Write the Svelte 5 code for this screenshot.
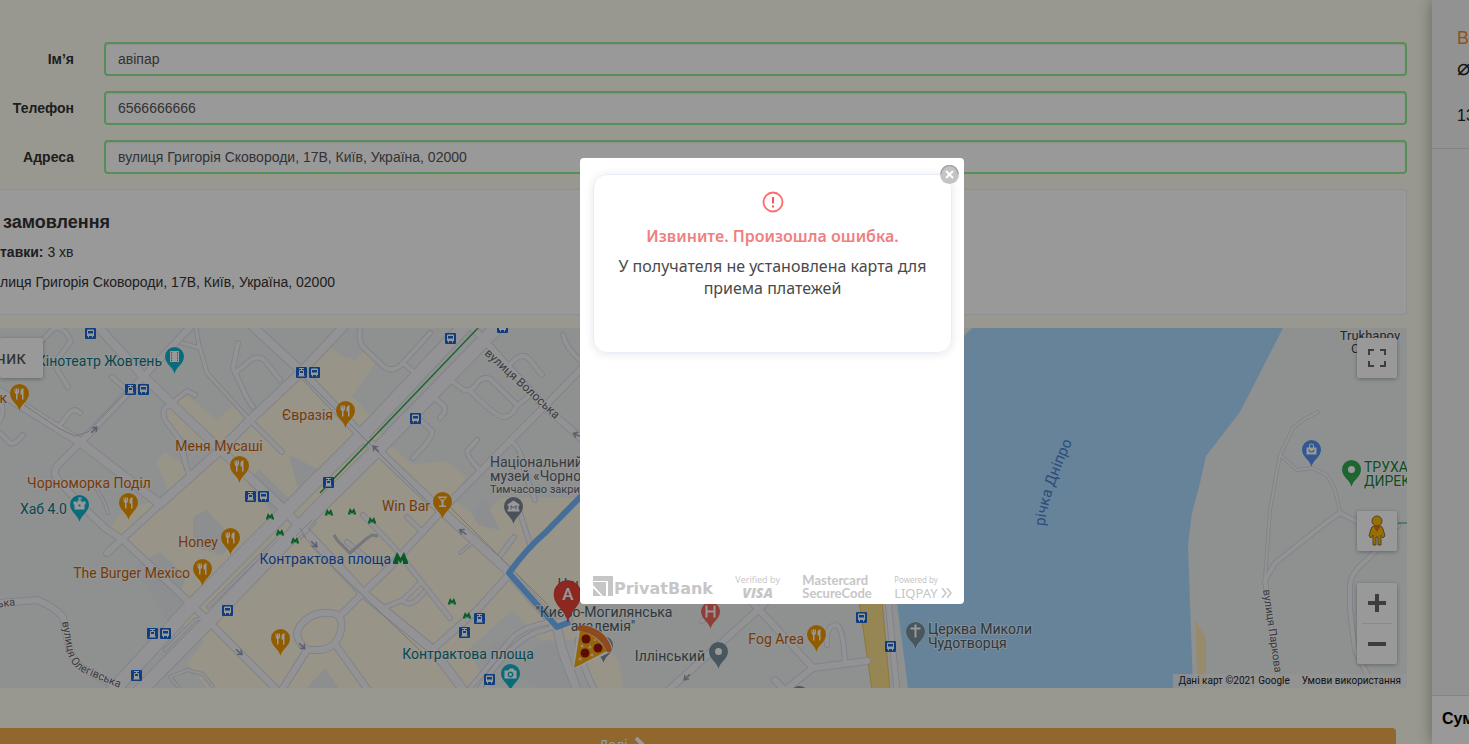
<script>
  let fields = $state([
    { id: 'name', label: 'Ім’я', value: 'авіпар' },
    { id: 'phone', label: 'Телефон', value: '6566666666' },
    { id: 'address', label: 'Адреса', value: 'вулиця Григорія Сковороди, 17В, Київ, Україна, 02000' }
  ]);
  let open = $state(true);

  const food = '#f29900';
  const teal = '#12b5cb';
  const slate = '#78909c';
  const brown = '#c5630c';
  const tealText = '#0d7782';
  const slateText = '#4a6068';

  const roads = [
    { w: 3, d: 'M182 343L200 348L207 373L247 417M196 328L199 346' },
    { w: 4, d: 'M43 340L52 330Q60 325 67 334L71 341L60 356Q52 364 60 374L68 387M60 425L70 412Q76 408 80 413M0 433L10 443Q14 446 23 435M0 400Q5 412 0 420M112 377L127 390M182 452L188 472' },
    { w: 4, d: 'M188 472L180 440L165 420Q161 410 168 406L187 391L195 395M238 343L233 368L247 398L253 407M235 373L252 359Q260 355 266 362L280 380M250 420L282 452' },
    { w: 4, d: 'M360 330Q358 342 364 348L383 366Q393 374 403 363L430 333M403 363L415 373M450 380L464 390Q470 392 475 386Q482 375 490 379L517 405Q512 417 503 417Q495 416 470 391M517 406L530 395M508 366L517 358Q524 353 530 360L542 375' },
    { w: 4, d: 'M435 398L444 406Q447 411 440 418M420 420L432 431Q434 437 413 458M477 440L468 450Q464 454 480 470M563 335Q566 348 580 360M513 443Q522 450 524 470L535 500M520 513L531 547' },
    { w: 4, d: 'M363 515L393 546L420 580L450 618M407 517L423 533M347 542L372 562M383 608L403 600L420 583M403 600Q410 610 424 592M514 537L497 560' },
    { w: 2, d: 'M460 553L472 543M208 607L280 536L300 528M165 650L195 620L228 610M170 677L187 670L203 674L213 687M170 677L178 687M95 487Q105 500 108 513' },
    { w: 6, d: 'M193 324L143 377L80 443L57 466Q52 473 58 480L83 507L105 528L123 540L190 603L280 693L307 650M157 507L107 553M0 603L37 600Q55 607 63 617L67 637Q70 658 82 668L120 688' },
    { w: 6, d: 'M307 650Q292 637 300 626Q312 611 330 613Q344 614 341 630Q337 648 320 650ZM335 644L368 690M341 615L363 593L390 567L450 502L543 408L584 366' },
    { w: 8, d: 'M92 320L143 376L213 443L276 502L306 532L363 593L433 650L465 692M0 392L80 442L160 504L217 453L250 420L300 373L348 322M250 324L300 370L363 437L433 503L507 570L557 627L562 650L577 690' },
    { w: 6, d: 'M473 328L543 405L584 441M430 652L477 610L507 577' },
    { w: 4, d: 'M467 692L513 637Q530 622 570 620M558 625L545 630Q515 635 480 688' },
    { w: 13, d: 'M472 318L360 437L280 517L190 607L108 696' },
    { w: 13, d: 'M508 316L380 447L313 513L213 617L135 696' },
    { w: 6, d: 'M662 696L758 610L772 596M750 600L813 668L780 694M813 668L867 661M775 680L784 690' },
    { w: 4, d: 'M827 645Q825 626 836 625Q843 625 845 662M702 621L715 610' },
    { w: 5, d: 'M888 600L897 692M578 640Q583 670 595 690' },
    { w: 2, d: 'M1318 412L1303 420L1293 428L1280 455L1270 510L1265 578M1280 455L1297 470L1312 468L1327 475L1335 490L1340 512' },
    { w: 4, d: 'M1398 526L1380 533L1340 513L1327 522L1275 563L1265 580L1277 667L1278 690M1377 550L1358 568Q1350 577 1350 587V610L1355 650L1375 690' }
  ];

  const pins = [
    { x: 174, y: 374, c: teal, g: 'film' },
    { x: 19, y: 411, c: food, g: 'fork' },
    { x: 345, y: 428, c: food, g: 'fork' },
    { x: 239, y: 483, c: food, g: 'fork' },
    { x: 128, y: 520, c: food, g: 'fork' },
    { x: 79, y: 522, c: teal, g: 'castle' },
    { x: 230, y: 555, c: food, g: 'fork' },
    { x: 202, y: 586, c: food, g: 'fork' },
    { x: 280, y: 656, c: food, g: 'fork' },
    { x: 442, y: 519, c: food, g: 'glass' },
    { x: 513, y: 524, c: '#7f8894', g: 'museum' },
    { x: 510, y: 691, c: teal, g: 'camera' },
    { x: 816, y: 652, c: food, g: 'fork' },
    { x: 710, y: 629, c: '#ee675c', g: 'H' },
    { x: 718, y: 669, c: slate, g: 'dot' },
    { x: 603, y: 663, c: slate, g: 'dot' },
    { x: 799, y: 713, c: slate, g: 'dot' },
    { x: 915, y: 649, c: slate, g: 'cross' },
    { x: 1311, y: 467, c: '#5491f5', g: 'bag' },
    { x: 1351, y: 487, c: '#34a853', g: 'dot' }
  ];

  const labels = [
    { x: 162, y: 366, t: 'Кінотеатр Жовтень', c: tealText, a: 'end' },
    { x: 7, y: 403, t: 'к', c: brown, a: 'end' },
    { x: 333, y: 420, t: 'Євразія', c: brown, a: 'end' },
    { x: 219, y: 451, t: 'Меня Мусаші', c: brown, a: 'middle' },
    { x: 89, y: 488, t: 'Чорноморка Поділ', c: brown, a: 'middle' },
    { x: 67, y: 514, t: 'Хаб 4.0', c: tealText, a: 'end' },
    { x: 218, y: 547, t: 'Honey', c: brown, a: 'end' },
    { x: 190, y: 578, t: 'The Burger Mexico', c: brown, a: 'end' },
    { x: 430, y: 511, t: 'Win Bar', c: brown, a: 'end' },
    { x: 391, y: 564, t: 'Контрактова площа', c: '#185abc', a: 'end' },
    { x: 468, y: 659, t: 'Контрактова площа', c: tealText, a: 'middle' },
    { x: 490, y: 467, t: 'Національний', c: '#5b6470', a: 'start' },
    { x: 490, y: 481, t: 'музей «Чорнобиль»', c: '#5b6470', a: 'start' },
    { x: 490, y: 493, t: 'Тимчасово закрито', c: '#5b6470', a: 'start', s: 11 },
    { x: 604, y: 589, t: 'Національний', c: slateText, a: 'middle' },
    { x: 604, y: 617, t: '"Києво-Могилянська', c: slateText, a: 'middle' },
    { x: 603, y: 631, t: 'академія"', c: slateText, a: 'middle' },
    { x: 705, y: 661, t: 'Іллінський', c: slateText, a: 'end' },
    { x: 804, y: 644, t: 'Fog Area', c: brown, a: 'end' },
    { x: 928, y: 634, t: 'Церква Миколи', c: slateText, a: 'start' },
    { x: 928, y: 648, t: 'Чудотворця', c: slateText, a: 'start' },
    { x: 1364, y: 472, t: 'ТРУХАНІВ', c: '#188038', a: 'start' },
    { x: 1364, y: 486, t: 'ДИРЕКЦІЯ', c: '#188038', a: 'start' },
    { x: 1370, y: 340, t: 'Trukhanov', c: '#3c4043', a: 'middle', s: 13 },
    { x: 1370, y: 353, t: 'Ostrov', c: '#3c4043', a: 'middle', s: 13 }
  ];

  const stops = [
    [90, 333, 'bus'], [130, 389, 'tram'], [143, 389, 'bus'], [301, 372, 'tram'], [314, 372, 'bus'],
    [450, 338, 'bus'], [502, 327, 'bus'], [415, 418, 'bus'], [328, 482, 'tram'], [250, 496, 'tram'],
    [263, 496, 'bus'], [227, 610, 'bus'], [152, 633, 'tram'], [165, 633, 'bus'], [136, 675, 'tram'],
    [479, 618, 'tram'], [464, 632, 'tram'], [489, 679, 'bus'], [861, 617, 'bus'], [890, 646, 'bus']
  ];

  const metros = [[270, 516], [280, 532], [295, 540], [329, 512], [352, 511], [372, 520], [452, 601], [467, 615]];
  const arrows = [[94, 430, -45], [376, 449, 225], [577, 435, 205], [463, 532, 215], [314, 544, 45], [239, 652, 40], [302, 646, 45], [687, 677, 135]];
</script>

<div class="page">
  <main>
    <form>
      {#each fields as f}
        <div class="row">
          <label for={f.id}>{f.label}</label>
          <input id={f.id} type="text" bind:value={f.value} />
        </div>
      {/each}
    </form>

    <section class="order">
      <h2>замовлення</h2>
      <p><b>тавки:</b> 3 хв</p>
      <p>лиця Григорія Сковороди, 17В, Київ, Україна, 02000</p>
    </section>

    <section class="map">
      <svg class="canvas" viewBox="0 328 1407 360" preserveAspectRatio="xMidYMid slice">
        <rect x="0" y="328" width="1407" height="360" fill="#eef2f2" />
        <g fill="#fef7e2">
          <path d="M160 414L187 395L217 420L234 405L246 416L214 450L180 437Z" />
          <path d="M156 461L165 452L180 462L190 472L217 447L300 372L327 345L343 357L356 360L364 350L376 362L352 396L370 415L385 441L413 465L429 463L447 461L466 477L452 498L480 520L500 498H590V640H540L512 610L468 650L490 690H208L187 662L204 643L166 609L178 590L150 558L107 531L122 512L170 495Z" />
          <path d="M580 635L600 640L618 660L624 690H592Z" />
        </g>
        <g fill="#e9edf0">
          <path d="M133 567L160 552L186 576L180 598L188 612L168 622Z" />
          <path d="M193 517L207 510L230 536L237 540L222 555L193 547Z" />
          <path d="M248 484L259 469L293 503L274 514Z" />
          <path d="M289 455L318 469L300 495Z" />
          <path d="M474 658L507 636L520 655L548 640L570 660L580 690H545Z" />
          <path d="M470 510L485 500L500 530L478 525Z" />
          <path d="M305 690L325 668L340 690Z" />
        </g>
        <path d="M972 328H1283L1240 412L1206 456L1200 483L1192 513L1188 545L1193 688H908L897 603H940V360Z" fill="#aadaff" />
        <path d="M979 328L960 350" stroke="#c9d6df" fill="none" />
        <path d="M1195 620L1206 638V688H1198Z" fill="#fce8b2" />
        <path d="M859 600H882L890 690H872Z" fill="#fbe08c" stroke="#f3c84f" />
        {#each roads as r}
          <path d={r.d} stroke-width={r.w + 2} class="casing" />
        {/each}
        {#each roads as r}
          <path d={r.d} stroke-width={r.w} class="road" />
        {/each}
        <path d="M24 405L60 429L75 436L88 432L130 388M300 374L430 504M450 507L550 607M300 528L306 538M310 545L430 660" stroke="#c3c7cf" fill="none" />
        <path d="M478 328L320 493" stroke="#34a853" stroke-width="1.5" fill="none" />
        <path d="M317 522L300 540M312 520L296 536M334 534L350 555L368 537" stroke="#cfd1da" stroke-width="1" fill="none" />
        <path d="M334 535L337 540L350 553L366 539L372 535L378 536" stroke="#c3c6d0" stroke-width="3" fill="none" />
        <path d="M1398 523H1407" stroke="#34a853" fill="none" />
        <path d="M590 487L545 533Q528 547 509 573L557 627L570 622" stroke="#73b9ff" stroke-width="6" stroke-linejoin="round" fill="none" />

        {#each arrows as [x, y, r]}
          <path transform="translate({x} {y}) rotate({r})" d="M-4 0H3M0 -3L4 0L0 3" stroke="#9aa0b4" stroke-width="1.5" fill="none" />
        {/each}

        {#each stops as [x, y, kind]}
          <g transform="translate({x} {y})">
            <rect x="-5" y="-5" width="11" height="11" rx="1" fill="#1967d2" />
            {#if kind === 'bus'}
              <path fill="#fff" fill-rule="evenodd" d="M-3 -2.5Q-3 -3.5 -2 -3.5H3Q4 -3.5 4 -2.5V3H3V4.500H2V3H-1V4.500H-2V3H-3ZM-2 -2V.5H3V-2Z" />
            {:else}
              <path fill="#fff" fill-rule="evenodd" d="M-2 -4H3V-3H1V-2H2Q3 -2 3 -1V3L4 4.500H-3L-2 3V-1Q-2 -2 -1 -2H0V-3H-2ZM-1 -1V1H2V-1Z" />
            {/if}
          </g>
        {/each}

        {#each metros as [x, y]}
          <path transform="translate({x} {y})" d="M-4 3.500V2.500L-2 -3L0 0L2 -3L4 2.500V3.500H1.500L1.500 1L0 3L-1.500 1V3.500Z" fill="#0a9a3c" />
        {/each}
        <path d="M393 564V562L397 552L400.500 558L404 552L408 562V564H403V561L402.500 560L400.500 563.500L398.500 560L398 564Z" fill="#0a9a3c" />

        {#each labels as l}
          <text x={l.x} y={l.y} fill={l.c} text-anchor={l.a} font-size={l.s ?? 14} class="halo">{l.t}</text>
        {/each}

        <defs>
          <path id="volosska" d="M484 354L556 420" />
          <path id="olehivska" d="M62 622L67 650Q70 666 84 673L122 689" />
          <path id="olehivska-west" d="M-8 608L20 605" />
          <path id="river" d="M1045 526Q1047 495 1075 436" />
          <path id="parkova" d="M1263 590L1275 674" />
        </defs>
        <text class="halo street"><textPath href="#volosska">вулиця Волоська</textPath></text>
        <text class="halo street small"><textPath href="#olehivska">вулиця Олегівська</textPath></text>
        <text class="halo street small"><textPath href="#olehivska-west">ська</textPath></text>
        <text class="halo street small"><textPath href="#parkova">вулиця Паркова</textPath></text>
        <text class="river"><textPath href="#river">річка Дніпро</textPath></text>

        {#each pins as p}
          <g transform="translate({p.x + 0.5} {p.y})">
            <path d="M0 0C-1.500 -7 -9.500 -10 -9.500 -17.500A9.500 9.500 0 1 1 9.500 -17.500C9.500 -10 1.500 -7 0 0Z" fill={p.c} stroke="#fff" stroke-width="1" paint-order="stroke" stroke-opacity=".6" />
            <g transform="translate(0 -17.500)" fill="#fff">
              {#if p.g === 'fork'}
                <path d="M-5 -5H-4V-2H-3.500V-5H-2V-2H-1.500V-5H-.5V-2Q-.5 0 -2 .5V6H-3.500V.5Q-5 0 -5 -2ZM4 -5.500V6H2.500V1H1V-3Q1.500 -5 4 -5.500Z" />
              {:else if p.g === 'glass'}
                <path d="M-5 -5H5L1 0V4H3.500V5.500H-3.500V4H-1V0ZM-2.500 -3.500L-1.500 -2H1.500L2.500 -3.500Z" fill-rule="evenodd" />
              {:else if p.g === 'film'}
                <path fill-rule="evenodd" d="M-4.500 -5.500H4.500V5.500H-4.500ZM-3.500 -4.500V-3H-2.500V-4.500ZM-3.500 -2V-.5H-2.500V-2ZM-3.500 .5V2H-2.500V.5ZM-3.500 3V4.500H-2.500V3ZM2.500 -4.500V-3H3.500V-4.500ZM2.500 -2V-.5H3.500V-2ZM2.500 .5V2H3.500V.5ZM2.500 3V4.500H3.500V3Z" />
              {:else if p.g === 'castle'}
                <path fill-rule="evenodd" d="M-6 -3H-3V-2H-2V-4H-1V-7H2V-5H0V-4H2V-2H3V-3H6V0H5V5H-5V0H-6ZM-1 0V2H1V0Z" />
              {:else if p.g === 'museum'}
                <path fill-rule="evenodd" d="M-6 -2L0 -6L6 -2V-1H5V3H6V5H-6V3H-5V-1H-6ZM-3 -1V3H-2V0L0 2L2 0V3H3V-1H2L0 1L-2 -1Z" />
              {:else if p.g === 'camera'}
                <path fill-rule="evenodd" d="M-6 -3H-2L-1 -5H3L4 -3H6V5H-6ZM0 -2A3 3 0 1 0 .1 -2ZM0 -.5A1.500 1.500 0 1 1 -.1 -.5Z" />
              {:else if p.g === 'cross'}
                <path d="M-1 -7H1V-4H5V-2H1V6H-1V-2H-5V-4H-1Z" />
              {:else if p.g === 'bag'}
                <path fill-rule="evenodd" d="M-5 -2H-2.500V-4Q-2.500 -6 0 -6T2.500 -4V-2H5V5H-5ZM-1.500 -2H1.500V-4Q1.500 -5 0 -5T-1.500 -4ZM-3 0Q-3 3 0 3T3 0H2Q2 2 0 2T-2 0Z" />
              {:else if p.g === 'H'}
                <path d="M-5 -6H-3V-1H3V-6H5V6H3V1H-3V6H-5Z" />
              {:else}
                <circle r="3.500" />
              {/if}
            </g>
          </g>
        {/each}

        <path d="M568 622C566 610 554 606 554 594A13.500 13.500 0 1 1 581 594C581 606 570 610 568 622Z" fill="#ea4335" stroke="#c5221f" stroke-width=".5" />
        <text x="568" y="600" text-anchor="middle" font-size="17" font-weight="500" fill="#fff">A</text>

        <g>
          <path d="M579 628Q584 625 590 627Q608 633 612 650L606 653L574 668Z" fill="#fff" stroke="#fff" stroke-width="2" stroke-linejoin="round" />
          <path d="M580 631Q596 634 607 651L574 668Z" fill="#fbac10" />
          <path d="M577 627Q581 624 588 626Q608 632 612 650Q611 653 607 652Q600 635 580 631Q577 630 577 627Z" fill="#ef7a34" />
          <g fill="#9c1410">
            <circle cx="586" cy="639" r="4.500" /><circle cx="598" cy="648" r="4.500" /><circle cx="585" cy="653" r="4.500" />
          </g>
          <g fill="#ffe9b0">
            <circle cx="582" cy="646" r="1.500" /><circle cx="590" cy="647" r="1.500" /><circle cx="592" cy="655" r="1.500" /><circle cx="580" cy="659" r="1.500" /><circle cx="595" cy="640" r="1" />
          </g>
        </g>
      </svg>

      <button class="ctl satellite" type="button">ник</button>
      <button class="ctl full" type="button" aria-label="Fullscreen">
        <svg width="18" height="18" viewBox="0 0 18 18"><path d="M0 0H6V2H2V6H0ZM12 0H18V6H16V2H12ZM0 12H2V16H6V18H0ZM16 12H18V18H12V16H16Z" fill="#666" /></svg>
      </button>
      <div class="side">
        <button class="ctl" type="button" aria-label="Street View">
          <svg width="20" height="32" viewBox="0 0 20 32">
            <path d="M7 11H13Q15 11 16 14L18 21L16 23L14 20V30H11V22H9V30H6V20L4 23L2 21L4 14Q5 11 7 11Z" fill="#fbbc04" stroke="#8a6d3b" />
            <path d="M6 11H14L10 17Z" fill="#e8711a" />
            <circle cx="10" cy="6" r="5" fill="#fbbc04" stroke="#8a6d3b" />
          </svg>
        </button>
        <div class="zoom">
          <button type="button" aria-label="Zoom in"><svg width="18" height="18" viewBox="0 0 18 18"><path d="M7 0H11V7H18V11H11V18H7V11H0V7H7Z" fill="#666" /></svg></button>
          <hr />
          <button type="button" aria-label="Zoom out"><svg width="18" height="18" viewBox="0 0 18 18"><path d="M0 7H18V11H0Z" fill="#666" /></svg></button>
        </div>
      </div>
      <div class="credits"><span>Дані карт ©2021 Google</span><a href="#terms">Умови використання</a></div>
    </section>

    <button class="next" type="button">
      Далі
      <svg width="10" height="16" viewBox="0 0 10 16"><path d="M1 1L8 8L1 15" stroke="#fff" stroke-width="4" fill="none" /></svg>
    </button>
  </main>

  <aside>
    <div class="item">
      <a href="#item">В</a>
      <span>⌀</span>
      <strong>13</strong>
    </div>
    <div class="total">Сум</div>
  </aside>
</div>

{#if open}
  <div class="overlay">
    <div class="dialog" role="dialog" aria-modal="true" aria-labelledby="error-title">
      <button class="close" type="button" aria-label="Close" onclick={() => (open = false)}>
        <svg width="19" height="19" viewBox="0 0 19 19"><circle cx="9.500" cy="9.500" r="9.500" fill="#c4c4c4" /><path d="M1 9A8.500 8.500 0 0 1 18 9" stroke="#a5a5a5" stroke-width="1.500" fill="none" /><path d="M6 6L13 13M13 6L6 13" stroke="#fff" stroke-width="2" /></svg>
      </button>
      <div class="message">
        <svg width="22" height="22" viewBox="0 0 22 22"><circle cx="11" cy="11" r="9.500" fill="none" stroke="#ff6b6b" stroke-width="1.800" /><path d="M11 6V12.500M11 14.500V16.500" stroke="#ff5252" stroke-width="2" /></svg>
        <h1 id="error-title">Извините. Произошла ошибка.</h1>
        <p>У получателя не установлена карта для приема платежей</p>
      </div>
      <footer>
        <div class="privat">
          <svg width="20" height="20" viewBox="0 0 20 20"><path fill="#c6c6c6" fill-rule="evenodd" d="M0 0H20V20H15V5H0ZM0 6H13V20H10L0 9ZM0 12L8 20H0Z" /></svg>
          <b>PrivatBank</b>
        </div>
        <div class="visa"><small>Verified by</small><b>VISA</b></div>
        <div class="mc"><span>Mastercard</span><span>SecureCode</span></div>
        <div class="liq">
          <small>Powered by</small>
          <span>LIQPAY <svg width="11" height="10" viewBox="0 0 11 10"><path d="M1 0L5 5L1 10M6 0L10 5L6 10" stroke="#c6c6c6" stroke-width="1.500" fill="none" /></svg></span>
        </div>
      </footer>
    </div>
  </div>
{/if}

<style>
  :global(body) { margin: 0; overflow: hidden; font-family: "Liberation Sans", Arial, sans-serif; font-size: 14px; line-height: 20px; color: #333; }
  * { box-sizing: border-box; }
  button { font: inherit; border: 0; cursor: pointer; }

  .page { display: flex; height: 100vh; background: #fdfef0; overflow: hidden; }
  main { flex: 1; min-width: 0; padding-top: 42px; }
  form { display: grid; gap: 15px; margin-right: 25px; }
  .row { display: grid; grid-template-columns: 74px 1fr; gap: 30px; align-items: center; }
  label { text-align: right; font-weight: bold; }
  input { height: 34px; min-width: 0; padding: 6px 12px; border: 2px solid #90ee90; border-radius: 4px; background: #fff; box-shadow: inset 0 1px 1px rgba(0, 0, 0, .075); font: inherit; color: #555; }

  .order { margin: 15px 25px 13px 0; padding: 22px 0; height: 126px; border: 1px solid #eee; border-left: 0; border-radius: 0 4px 4px 0; background: #fff; white-space: nowrap; }
  h2 { margin: 0 0 10px 3px; font-size: 18px; line-height: 20px; }
  .order p { margin: 0 0 10px; }

  .map { position: relative; height: 360px; margin-right: 25px; overflow: hidden; font-family: Roboto, sans-serif; }
  .canvas { display: block; width: 100%; height: 100%; }
  .casing { stroke: #d8dae2; fill: none; stroke-linejoin: round; stroke-linecap: round; }
  .road { stroke: #f6f6fa; fill: none; stroke-linejoin: round; stroke-linecap: round; }
  .halo { stroke: #fff; stroke-width: 2px; paint-order: stroke; stroke-opacity: .6; stroke-linejoin: round; }
  .street { font-size: 12px; fill: #5f6368; }
  .small { font-size: 11px; }
  .river { font-size: 15px; fill: #4a7fd0; }

  .ctl, .zoom { background: #fff; border-radius: 2px; box-shadow: 0 1px 4px rgba(0, 0, 0, .3); }
  .ctl { display: grid; place-items: center; width: 40px; height: 40px; padding: 0; }
  .satellite { position: absolute; left: 0; top: 10px; width: 43px; padding-right: 17px; overflow: hidden; justify-content: end; font-size: 18px; color: #565656; }
  .full { position: absolute; right: 10px; top: 10px; }
  .side { position: absolute; right: 10px; bottom: 24px; display: grid; gap: 32px; }
  .zoom { display: grid; }
  .zoom button { display: grid; place-items: center; width: 40px; height: 40px; padding: 0; background: none; }
  hr { width: 30px; height: 1px; margin: 0 auto; border: 0; background: #e6e6e6; }
  .credits { position: absolute; right: 0; bottom: 0; display: flex; gap: 12px; padding: 0 6px 0 5px; background: rgba(245, 245, 245, .75); font-size: 10px; line-height: 14px; color: #222; }
  .credits a { color: inherit; text-decoration: none; }

  .next { display: flex; align-items: center; justify-content: center; gap: 8px; width: calc(100% + 116px); height: 34px; margin: 40px 0 0 -152px; border-radius: 4px; background: #f0ad4e; color: #fff; font-size: 14px; }

  aside { display: flex; flex-direction: column; justify-content: space-between; width: 37px; background: #f3f3f3; box-shadow: 0 0 16px rgba(0, 0, 0, .35); overflow: hidden; white-space: nowrap; color: #222; z-index: 1; }
  .item { display: grid; align-content: start; height: 149px; padding: 28px 0 0 25px; border-bottom: 1px solid #ddd; font-size: 16px; }
  .item a { font-size: 18px; color: #f58634; text-decoration: none; }
  .item span { margin: 10px 0 28px; font-size: 22px; }
  .item strong { font-weight: normal; }
  .total { height: 49px; padding: 13px 0 0 10px; border-top: 1px solid #ddd; background: #fff; font-size: 16px; font-weight: bold; color: #000; }

  .overlay { position: fixed; inset: 0; z-index: 2; display: grid; place-items: center; padding: 17px 0 0 75px; background: rgba(0, 0, 0, .4); }
  .dialog { position: relative; display: flex; flex-direction: column; justify-content: space-between; width: 384px; min-height: 446px; padding: 16px 12px 4px 13px; border-radius: 4px; background: #fff; font-family: "Noto Sans", sans-serif; }
  .close { position: absolute; right: 5px; top: 7px; padding: 0; width: 19px; height: 19px; background: none; border-radius: 50%; }
  .close svg { display: block; }
  .message { min-height: 179px; padding: 16px; border: 1px solid #e8eef5; border-radius: 14px; box-shadow: 0 1px 10px rgba(0, 0, 0, .1); text-align: center; }
  .message > svg { display: block; margin: 0 auto; }
  h1 { margin: 12px 0 8px; font-size: 16px; line-height: 22px; font-weight: 600; color: #f08080; }
  .message p { margin: 0; font-size: 16px; line-height: 22px; color: #4a4a4a; }

  footer { display: flex; justify-content: space-between; align-items: end; color: #c6c6c6; }
  footer small, footer span, footer b { display: block; }
  .privat { display: flex; align-items: end; gap: 1px; padding-bottom: 4px; }
  .privat b { font-family: "DejaVu Sans", sans-serif; font-size: 16px; line-height: 14px; }
  .visa, .mc, .liq { display: grid; justify-items: center; }
  .visa small { font-family: "Open Sans", sans-serif; font-size: 9px; line-height: 12px; }
  .visa b { font-family: "Open Sans", sans-serif; font-size: 14px; line-height: 14px; font-style: italic; font-weight: 800; }
  .mc { font-family: Lato, sans-serif; font-size: 13px; line-height: 13px; font-weight: 700; justify-items: start; }
  .liq { justify-items: start; }
  .liq small { font-size: 8px; line-height: 12px; }
  .liq span { font-size: 13px; line-height: 14px; }
</style>
